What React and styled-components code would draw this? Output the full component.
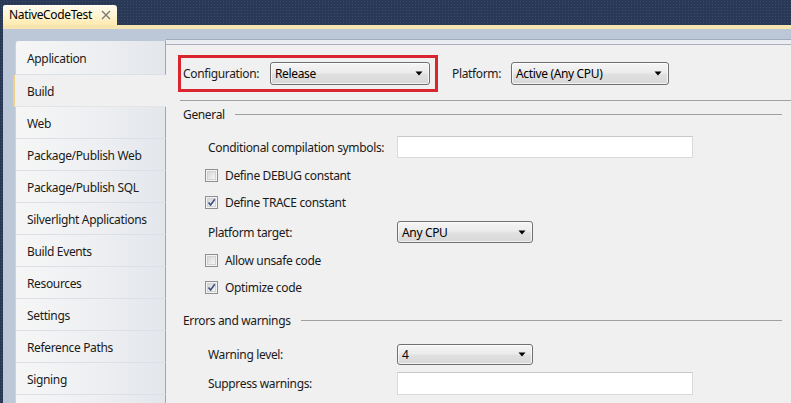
import React from 'react';
import styled, { createGlobalStyle } from 'styled-components';

const Global = createGlobalStyle`
  html, body { margin: 0; padding: 0; }
  body {
    width: 791px; height: 403px; overflow: hidden;
    font-family: "Noto Sans", "Open Sans", sans-serif;
    font-size: 12px; letter-spacing: -0.35px; color: #1a1a1a;
  }
`;

const Root = styled.div`
  width: 791px; height: 403px; overflow: hidden;
  display: flex; flex-direction: column;
  background-color: #293955;
  background-image: radial-gradient(rgba(70, 92, 130, 0.55) 0.7px, transparent 1px);
  background-size: 3px 3px;
`;

const TabStrip = styled.div`
  flex: none; height: 25px;
  display: flex; align-items: flex-end; padding-left: 3px;
`;

const DocTab = styled.div`
  width: 114px; height: 20px; box-sizing: border-box;
  display: flex; align-items: center; justify-content: space-between;
  padding: 0 6px;
  background: linear-gradient(#fffcf0, #fff3cf 55%, #ffeab0);
  border-radius: 2px 3px 0 0;
  color: #000; font-size: 12px; line-height: 20px;
`;

const Frame = styled.div`
  flex: 1; min-height: 0;
  margin-left: 3px;
  display: flex; flex-direction: column;
  background: #bcc7d8;
  border-top: 4px solid #f6e5b0;
  padding: 10px 0 0 12px;
`;

const Body = styled.div`
  flex: 1; min-height: 0; display: flex;
`;

const Sidebar = styled.div`
  width: 151px; flex: none;
  display: flex; flex-direction: column;
  padding-top: 2px;
`;

const NavItem = styled.div`
  flex: none; box-sizing: border-box;
  height: ${p => p.$h}px;
  display: flex; align-items: center;
  padding: 2px 0 0 11px;
  background: linear-gradient(to right, #f6f6f6, #eceef1 60%, #e3e6eb);
  border-left: 1px solid #cdd2da;
  border-right: 1px solid #9ea6b4;
  border-bottom: 1px solid #dcdfe5;
  border-radius: ${p => (p.$first ? '3px 0 0 0' : '0')};
  color: #1a1a1a;
  ${p => p.$active && `
    margin-left: -2px;
    padding-left: 12px;
    background: #f0f0f0;
    border-left: 2px solid #efd086;
    border-right: none;
    border-bottom: 1px solid #e4e4e4;
    border-radius: 2px 0 0 2px;
  `}
`;

const NavFill = styled.div`
  flex: 1;
  background: linear-gradient(to right, #f6f6f6, #eceef1 60%, #e3e6eb);
  border-left: 1px solid #cdd2da;
  border-right: 1px solid #9ea6b4;
`;

const Content = styled.div`
  flex: 1; min-width: 0; display: flex; flex-direction: column;
`;

const TopBand = styled.div`
  flex: none; height: 4px;
  background: #eaedf2;
  border-top: 1px solid #a2aabb;
  border-bottom: 1px solid #aeadbd;
`;

const Panel = styled.div`
  flex: 1; background: #f0f0f0;
  padding: 10px 0 0 12px;
  display: flex; flex-direction: column;
`;

const ConfigRow = styled.div`
  display: flex; align-items: center; flex: none;
`;

const RedBox = styled.div`
  display: flex; align-items: center;
  border: 3px solid #d9252e;
  padding: 4px 5px 4px 2px;
`;

const InlineLabel = styled.span`
  width: ${p => p.$w}px; margin-left: ${p => p.$ml || 0}px;
  white-space: nowrap;
`;

const Select = styled.div`
  box-sizing: border-box;
  width: ${p => p.$w}px; height: ${p => p.$h || 23}px;
  display: flex; align-items: center; justify-content: space-between;
  padding: 0 6px 0 4px;
  border: 1px solid #707070; border-radius: 3px;
  background: linear-gradient(#f5f5f5, #ececec 45%, #e0e0e0 55%, #d8d8d8);
  box-shadow: inset 0 0 0 1px rgba(255, 255, 255, 0.7);
  color: #000;
`;

const Arrow = () => (
  <svg width="8" height="5" viewBox="0 0 8 5"><path d="M0.5 0.5 H7.5 L4 4.5 Z" fill="#000" /></svg>
);

const Divider = styled.div`
  flex: none; height: 1px; background: #a0a0a0;
  margin: 8px 0 0 2px;
`;

const GroupHeader = styled.div`
  flex: none; height: ${p => p.$h}px;
  display: flex; align-items: center;
  padding-left: 5px;
  &::after {
    content: ""; flex: 1; height: 1px; background: #a0a0a0;
    margin: 0 9px 0 10px;
  }
`;

const FormRow = styled.div`
  flex: none; height: ${p => p.$h}px;
  display: flex; align-items: center;
  padding-left: ${p => (p.$check ? 27 : 30)}px;
`;

const FieldLabel = styled.span`
  width: 189px; flex: none; white-space: nowrap;
`;

const TextBox = styled.div`
  box-sizing: border-box;
  width: 296px; height: ${p => p.$h || 22}px;
  background: #fff;
  border: 1px solid #dadada; border-top-color: #c8c8c8;
`;

const CheckBox = styled.span`
  box-sizing: border-box; flex: none;
  width: 13px; height: 13px; margin-right: 7px;
  border: 1px solid #8e8f8f;
  background: #f4f4f4;
  display: flex; align-items: center; justify-content: center;
`;

const CheckInner = styled.span`
  width: 9px; height: 9px; box-sizing: border-box;
  border: 1px solid #d2d2d2;
  background: linear-gradient(135deg, #d6d6d6, #f7f7f7);
  display: flex; align-items: center; justify-content: center;
`;

const Check = ({ checked, label }) => (
  <>
    <CheckBox>
      <CheckInner>
        {checked && (
          <svg width="9" height="9" viewBox="0 0 9 9" style={{ overflow: 'visible' }}>
            <path d="M1.5 4.5 L3.6 7 L7.8 1.2" stroke="#3a4f86" strokeWidth="1.6" fill="none" />
          </svg>
        )}
      </CheckInner>
    </CheckBox>
    <span>{label}</span>
  </>
);

const CloseX = () => (
  <svg width="10" height="10" viewBox="0 0 10 10">
    <path d="M1 1 L9 9 M9 1 L1 9" stroke="#7b7b7b" strokeWidth="1.4" />
  </svg>
);

const navItems = [
  'Application', 'Build', 'Web', 'Package/Publish Web', 'Package/Publish SQL',
  'Silverlight Applications', 'Build Events', 'Resources', 'Settings',
  'Reference Paths', 'Signing', '',
];

export default function App() {
  return (
    <>
      <Global />
      <Root>
        <TabStrip>
          <DocTab>
            <span>NativeCodeTest</span>
            <CloseX />
          </DocTab>
        </TabStrip>
        <Frame>
          <Body>
            <Sidebar>
              {navItems.map((n, i) => (
                <NavItem key={i} $h={i === 0 ? 34 : 32} $first={i === 0} $active={n === 'Build'}>
                  {n}
                </NavItem>
              ))}
              <NavFill />
            </Sidebar>
            <Content>
              <TopBand />
              <Panel>
                <ConfigRow>
                  <RedBox>
                    <InlineLabel $w={87}>Configuration:</InlineLabel>
                    <Select $w={160}><span>Release</span><Arrow /></Select>
                  </RedBox>
                  <InlineLabel $w={59} $ml={14}>Platform:</InlineLabel>
                  <Select $w={158}><span>Active (Any CPU)</span><Arrow /></Select>
                </ConfigRow>
                <Divider />
                <GroupHeader $h={26}>General</GroupHeader>
                <FormRow $h={40}>
                  <FieldLabel>Conditional compilation symbols:</FieldLabel>
                  <TextBox />
                </FormRow>
                <FormRow $h={16} $check><Check label="Define DEBUG constant" /></FormRow>
                <FormRow $h={38} $check><Check checked label="Define TRACE constant" /></FormRow>
                <FormRow $h={22}>
                  <FieldLabel>Platform target:</FieldLabel>
                  <Select $w={136} $h={22}><span>Any CPU</span><Arrow /></Select>
                </FormRow>
                <FormRow $h={34} $check><Check label="Allow unsafe code" /></FormRow>
                <FormRow $h={20} $check><Check checked label="Optimize code" /></FormRow>
                <GroupHeader $h={46}>Errors and warnings</GroupHeader>
                <FormRow $h={22}>
                  <FieldLabel>Warning level:</FieldLabel>
                  <Select $w={136} $h={21}><span>4</span><Arrow /></Select>
                </FormRow>
                <FormRow $h={36}>
                  <FieldLabel>Suppress warnings:</FieldLabel>
                  <TextBox $h={23} />
                </FormRow>
              </Panel>
            </Content>
          </Body>
        </Frame>
      </Root>
    </>
  );
}
